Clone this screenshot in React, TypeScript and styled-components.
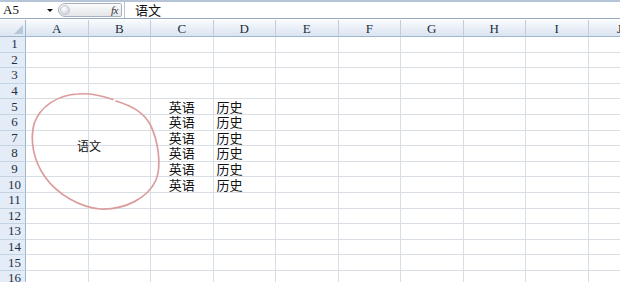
import React from "react";
import styled, { createGlobalStyle } from "styled-components";

const GlobalStyle = createGlobalStyle`
  html, body { margin: 0; padding: 0; background: #ffffff; overflow: hidden; }
  body { font-family: "Liberation Serif", "Noto Sans CJK SC", serif; }
`;

const Page = styled.div`
  position: relative;
  width: 620px;
  height: 282px;
  overflow: hidden;
  background: #fff;
`;

const FormulaBar = styled.div`
  display: flex;
  align-items: center;
  height: 16px;
  border-top: 2px solid #b5c4d6;
  border-bottom: 1px solid #97a9c0;
  margin-bottom: 1px;
  background: #fff;
`;

const NameBox = styled.div`
  width: 44px;
  padding-left: 3px;
  font-family: "Liberation Serif", serif;
  font-size: 13px;
  color: #111;
  line-height: 16px;
`;

const DropArrow = styled.div`
  width: 0;
  height: 0;
  border-left: 3px solid transparent;
  border-right: 3px solid transparent;
  border-top: 3px solid #111;
  margin-right: 5px;
`;

const Pill = styled.div`
  position: relative;
  display: flex;
  align-items: center;
  justify-content: flex-end;
  width: 64px;
  height: 14px;
  border: 1px solid #a7b1bf;
  border-radius: 8px 2px 2px 8px;
  background: linear-gradient(#fbfbfb, #e4e6ea);
  box-sizing: border-box;
  padding-right: 3px;
`;

const Knob = styled.div`
  position: absolute;
  left: 1px;
  top: 1px;
  width: 10px;
  height: 10px;
  border-radius: 50%;
  background: radial-gradient(circle at 35% 35%, #ffffff 0%, #dfe3e8 55%, #b9c0c9 100%);
  border: 1px solid #c2c8d0;
  box-sizing: border-box;
`;

const Fx = styled.span`
  font-family: "Liberation Serif", serif;
  font-style: italic;
  font-size: 11px;
  color: #333;
  letter-spacing: -0.5px;
`;

const Separator = styled.div`
  width: 1px;
  height: 16px;
  background: #b8c4d2;
  margin-left: 2px;
`;

const FormulaText = styled.div`
  padding-left: 10px;
  font-family: "Noto Sans CJK SC", sans-serif;
  font-size: 13px;
  line-height: 16px;
  color: #111;
`;

const Sheet = styled.div`
  display: grid;
  grid-template-columns: 26px repeat(10, 62.5px);
  grid-template-rows: 17px;
  grid-auto-rows: 15.6px;
`;

const Corner = styled.div`
  position: relative;
  box-sizing: border-box;
  background: linear-gradient(#f4f7fb, #dce5f0);
  border-right: 1px solid #9eb6ce;
  border-bottom: 1px solid #9eb6ce;
  &::after {
    content: "";
    position: absolute;
    right: 2px;
    bottom: 2px;
    width: 0;
    height: 0;
    border-left: 9px solid transparent;
    border-bottom: 9px solid #b7c6d8;
  }
`;

const ColHeader = styled.div`
  box-sizing: border-box;
  display: flex;
  align-items: center;
  justify-content: center;
  background: linear-gradient(#f9fbfd, #e6edf6 60%, #dbe4ef);
  border-right: 1px solid #c3ccd8;
  border-bottom: 1px solid #9eb6ce;
  font-family: "Liberation Serif", serif;
  font-size: 13px;
  line-height: 15px;
  color: #222d3b;
`;

const RowHeader = styled.div`
  box-sizing: border-box;
  display: flex;
  align-items: center;
  justify-content: center;
  background: #e4ecf7;
  border-right: 1px solid #9eb6ce;
  border-bottom: 1px solid #c5d2e2;
  font-family: "Liberation Serif", serif;
  font-size: 13px;
  line-height: 14px;
  color: #1f2f44;
  padding-left: 4px;
`;

const Cell = styled.div<{ $align?: "left" | "center" }>`
  box-sizing: border-box;
  display: flex;
  align-items: center;
  justify-content: ${(p) => (p.$align === "center" ? "center" : "flex-start")};
  padding-left: ${(p) => (p.$align === "center" ? "0" : "3px")};
  border-right: 1px solid #d9dde4;
  border-bottom: 1px solid #d9dde4;
  font-family: "Noto Sans CJK SC", sans-serif;
  font-size: 13px;
  line-height: 14px;
  color: #111;
  white-space: nowrap;
`;

const Shape = styled.svg`
  position: absolute;
  left: 0;
  top: 0;
  pointer-events: none;
`;

const ShapeLabel = styled.div`
  position: absolute;
  left: 77px;
  top: 137px;
  font-family: "Noto Sans CJK SC", sans-serif;
  font-size: 12px;
  line-height: 18px;
  color: #111;
`;

const cols = ["A", "B", "C", "D", "E", "F", "G", "H", "I", "J"];
const rows = Array.from({ length: 16 }, (_, i) => i + 1);

const cellData: Record<string, { text: string; align: "left" | "center" }> = {};
for (let r = 5; r <= 10; r++) {
  cellData[`C${r}`] = { text: "英语", align: "center" };
  cellData[`D${r}`] = { text: "历史", align: "left" };
}

export default function App() {
  return (
    <Page>
      <GlobalStyle />
      <FormulaBar>
        <NameBox>A5</NameBox>
        <DropArrow />
        <Pill>
          <Knob />
          <Fx>fx</Fx>
        </Pill>
        <Separator />
        <FormulaText>语文</FormulaText>
      </FormulaBar>
      <Sheet>
        <Corner />
        {cols.map((c) => (
          <ColHeader key={c}>{c}</ColHeader>
        ))}
        {rows.map((r) => (
          <React.Fragment key={r}>
            <RowHeader>{r}</RowHeader>
            {cols.map((c) => {
              const d = cellData[`${c}${r}`];
              return (
                <Cell key={c} $align={d?.align}>
                  {d?.text}
                </Cell>
              );
            })}
          </React.Fragment>
        ))}
      </Sheet>
      <Shape width="620" height="282" viewBox="0 0 620 282">
        <path
          d="M113,99.5 C100,95 88,93 78,94 C58,95 40,106 34,124 C30,140 33,160 45,177 C58,195 80,207 100,209 C125,210 148,198 156,180 C162,165 158,140 150,124 C143,112 132,106 116,101"
          fill="none"
          stroke="#dc9c9c"
          strokeWidth="1.7"
          strokeLinecap="round"
        />
      </Shape>
      <ShapeLabel>语文</ShapeLabel>
    </Page>
  );
}
